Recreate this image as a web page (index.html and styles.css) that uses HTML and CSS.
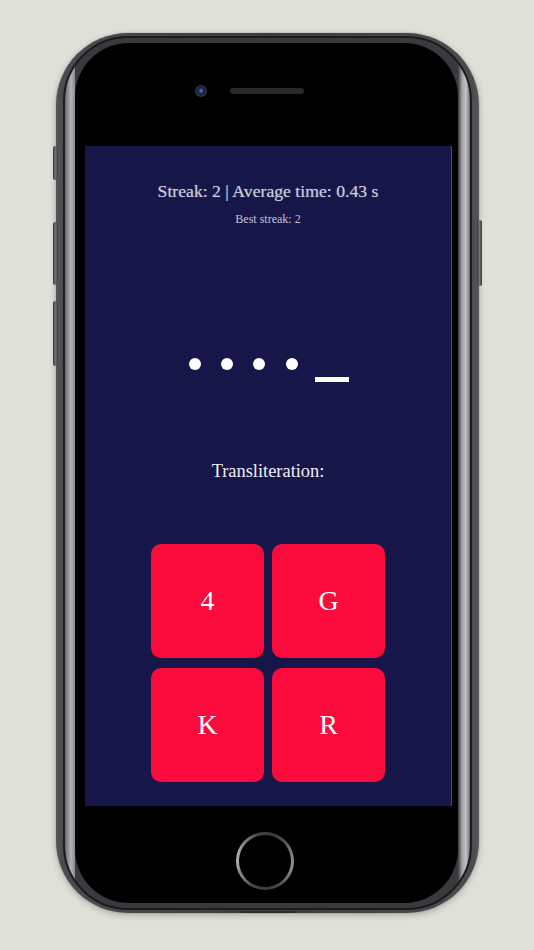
FILE: index.html
```html
<!DOCTYPE html>
<html lang="en">
<head>
<meta charset="utf-8">
<title>Morse trainer</title>
<link rel="stylesheet" href="styles.css">
</head>
<body>
<div class="phone">
  <span class="side side-mute"></span>
  <span class="side side-volup"></span>
  <span class="side side-voldown"></span>
  <span class="side side-power"></span>
  <div class="rim">
    <div class="face">
      <div class="top">
        <span class="camera"></span>
        <span class="speaker"></span>
      </div>
      <div class="screen">
        <p class="stats">Streak: 2 | Average time: 0.43 s</p>
        <p class="best">Best streak: 2</p>
        <div class="code">
          <span class="dot"></span>
          <span class="dot"></span>
          <span class="dot"></span>
          <span class="dot"></span>
          <span class="dash"></span>
        </div>
        <p class="prompt">Transliteration:</p>
        <div class="answers">
          <button class="answer">4</button>
          <button class="answer">G</button>
          <button class="answer">K</button>
          <button class="answer">R</button>
        </div>
      </div>
      <div class="bottom">
        <div class="home"><div class="home-inner"></div></div>
      </div>
    </div>
  </div>
  <span class="tab"></span>
</div>
</body>
</html>
```

FILE: styles.css
```css
* { box-sizing: border-box; }

html, body {
  margin: 0;
  padding: 0;
}

body {
  width: 534px;
  height: 950px;
  background: #dfe1d8;
  overflow: hidden;
  font-family: "Liberation Serif", "DejaVu Serif", serif;
}

.phone {
  position: relative;
  margin: 33px 0 0 56px;
  width: 423px;
  height: 880px;
  padding: 3px 7px;
  border-radius: 72px;
  background: linear-gradient(90deg, #55555a 0, #4a4a4f 7px, #3c3c40 50%, #4a4a4f calc(100% - 7px), #55555a 100%);
  box-shadow: 0 2px 6px rgba(0, 0, 0, 0.25), 0 0 1px rgba(0, 0, 0, 0.5);
}

.side {
  position: absolute;
  width: 5px;
  border-radius: 2px;
  background: linear-gradient(90deg, #3a3a3e, #707075 50%, #3a3a3e);
}
.side-mute { left: -3px; top: 113px; height: 34px; }
.side-volup { left: -3px; top: 189px; height: 63px; }
.side-voldown { left: -3px; top: 268px; height: 65px; }
.side-power { right: -3px; top: 187px; height: 66px; }

.tab {
  position: absolute;
  left: 184px;
  bottom: 0;
  width: 56px;
  height: 2px;
  border-radius: 1px;
  background: #2a2a2d;
}

.rim {
  height: 100%;
  border: 2px solid #1c1c1f;
  border-radius: 65px;
  padding: 5px 12px 5px 10px;
  background: linear-gradient(90deg, #6a6a70 0, #b2b2b6 6px, #8a8a8f 10px, #3a3a3e 10px, #3a3a3e calc(100% - 12px), #a0a0a5 calc(100% - 8px), #c4c4c8 calc(100% - 4px), #6a6a70 100%);
}

.face {
  height: 860px;
  border-radius: 54px;
  background: #000;
  display: flex;
  flex-direction: column;
  overflow: hidden;
}

.top {
  height: 103px;
  display: flex;
  padding: 42px 0 0 120px;
  align-items: flex-start;
}

.camera {
  width: 12px;
  height: 12px;
  border-radius: 50%;
  background: radial-gradient(circle at 50% 48%, #5d82d0 0, #2c4596 1.8px, #14204a 3px, #262629 4.2px, #3a3a3e 6px);
}

.speaker {
  width: 74px;
  height: 6px;
  margin: 3px 0 0 23px;
  border-radius: 3px;
  background: #29292b;
}

.screen {
  margin-left: 10px;
  width: 367px;
  height: 660px;
  background: #161748;
  border-right: 1px solid #4a4c74;
  display: flex;
  flex-direction: column;
  align-items: center;
  padding-top: 37px;
}

.stats {
  margin: 0;
  font-size: 17.7px;
  line-height: 17.5px;
  color: #c9cade;
  text-shadow: 0 0 1px rgba(200, 202, 222, 0.6);
}

.best {
  margin: 12px 0 0;
  font-size: 12px;
  line-height: 12px;
  color: #c4c5da;
}

.code {
  margin-top: 133px;
  height: 24px;
  display: flex;
  align-items: flex-start;
  gap: 20.3px;
  padding-left: 2px;
}

.dot {
  width: 12px;
  height: 12px;
  border-radius: 50%;
  background: #fff;
}

.dash {
  align-self: flex-end;
  width: 34px;
  height: 5px;
  margin-left: -2.6px;
  background: #fff;
}

.prompt {
  margin: 80px 0 0;
  font-size: 18.4px;
  line-height: 18px;
  color: #eeeef4;
}

.answers {
  margin-top: 64px;
  display: grid;
  grid-template-columns: 113px 113px;
  grid-auto-rows: 114px;
  column-gap: 8px;
  row-gap: 10px;
}

.answer {
  border: 0;
  border-radius: 10px;
  background: #fb0b3c;
  color: #fff;
  font-family: "Liberation Serif", "DejaVu Serif", serif;
  font-size: 28px;
  padding: 0;
  display: flex;
  align-items: center;
  justify-content: center;
}

.bottom {
  height: 97px;
  display: flex;
  justify-content: center;
  padding-top: 26px;
  padding-right: 4px;
}

.home {
  width: 58px;
  height: 58px;
  border-radius: 50%;
  padding: 3px;
  background: linear-gradient(95deg, #d6d6da 0%, #8a8a90 12%, #45454b 35%, #38383e 60%, #55555b 80%, #a4a4aa 100%);
}

.home-inner {
  width: 100%;
  height: 100%;
  border-radius: 50%;
  background: #000;
}
```
